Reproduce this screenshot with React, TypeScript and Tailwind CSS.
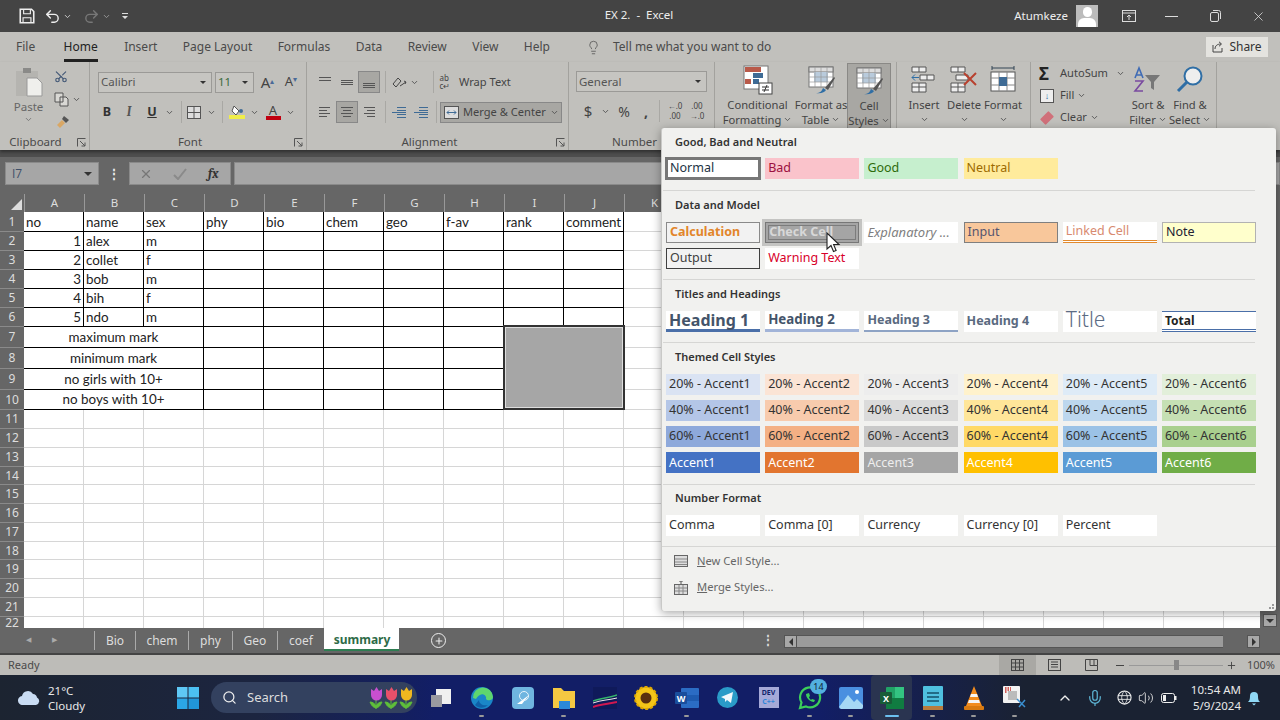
import React from 'react';
import { ChevronDown, ChevronUp, Lightbulb, Mic, Plus, Redo2, Scissors, Search, Undo2, Volume2, X } from 'lucide-react';

const Chev = ({ c = '#555' }: { c?: string }) => <ChevronDown size={9} strokeWidth={2.5} color={c} className="shrink-0" />;

const Lines = ({ rows, c = '#555' }: { rows: [number, number, number][]; c?: string }) => (
  <svg width="16" height="16" viewBox="0 0 16 16">
    {rows.map((r, i) => <rect key={i} x={r[0]} y={r[2]} width={r[1] - r[0]} height="1" fill={c} />)}
  </svg>
);

const Launcher = () => (
  <svg width="9" height="9" viewBox="0 0 9 9" className="shrink-0">
    <path d="M.5 8.5v-8h8M3 3l5 5M8 4.5V8H4.5" fill="none" stroke="#555" />
  </svg>
);

const Sep = () => <div className="w-px h-[22px] bg-[#a9a8a4] mx-[1px]" />;

const Combo = ({ w, text, c = '#555' }: { w: string; text: string; c?: string }) => (
  <div className={`${w} h-[21px] flex items-center justify-between px-[2px] bg-[#c6c5c1] border border-[#9b9a97] text-[11.5px]`} style={{ color: c }}>
    <span>{text}</span>
    <span className="w-0 h-0 mr-[3px] border-x-[3px] border-x-transparent border-t-[3px] border-t-[#333]" />
  </div>
);

const Slot = ({ w, children, cls = '' }: { w: string; children?: React.ReactNode; cls?: string }) => (
  <div className={`${w} h-[22px] flex items-center justify-center shrink-0 ${cls}`}>{children}</div>
);

const Group = ({ w, label, launcher, pr = 'pr-[16px]', children }: { w: string; label: string; launcher?: boolean; pr?: string; children: React.ReactNode }) => (
  <div className={`${w} h-[88px] shrink-0 flex flex-col relative border-r border-[#a3a29e]`}>
    <div className="h-[72px] shrink-0 flex">{children}</div>
    <div className={`h-[16px] shrink-0 flex items-center justify-center text-[11.5px] text-[#4a4a4a] ${pr}`}>{label}</div>
    {launcher && <div className="absolute right-[3px] bottom-[3px]"><Launcher /></div>}
  </div>
);

const BigBtn = ({ w, icon, l1, l2, cls = '' }: { w: string; icon: React.ReactNode; l1: string; l2?: string; cls?: string }) => (
  <div className={`${w} h-[66px] shrink-0 flex flex-col items-center text-[11.2px] leading-[15px] text-[#444] ${cls}`}>
    <div className="h-[35px] flex items-center justify-center">{icon}</div>
    <div className="whitespace-nowrap">{l1}</div>
    <div className="flex items-center gap-[2px] whitespace-nowrap h-[15px]">{l2}<Chev /></div>
  </div>
);

const TableIcon = ({ fill = '#fff' }: { fill?: string }) => (
  <svg width="34" height="30" viewBox="0 0 34 30">
    <rect x="5" y="2" width="24" height="20" fill={fill} stroke="#777" />
    <rect x="5" y="2" width="24" height="5" fill="#ddd" stroke="#777" />
    <rect x="10" y="7" width="14" height="10" fill="#b9cbdc" />
    <path d="M5 12h24M5 17h24M11 2v20M17 2v20M23 2v20" stroke="#999" strokeWidth=".7" />
    <path d="M12 28c4 0 6-2 7-5l3 2c-1 2-5 4-10 3z" fill="#2f6ea5" />
    <path d="M21 23l9-11 1 1-7 12z" fill="#555" />
  </svg>
);

const styleHead = 'text-[11px] font-semibold text-[#333] h-[19px] flex items-center pl-[13px]';
const cellBase = 'h-[21px] w-[94px] flex items-center px-[3px] text-[12.5px] leading-none whitespace-nowrap';

const themed: [string, string][][] = [
  [['20% - Accent1', 'bg-[#dae3f3]'], ['20% - Accent2', 'bg-[#fbe4d5]'], ['20% - Accent3', 'bg-[#ededed]'], ['20% - Accent4', 'bg-[#fff2cc]'], ['20% - Accent5', 'bg-[#deebf7]'], ['20% - Accent6', 'bg-[#e2efda]']],
  [['40% - Accent1', 'bg-[#b4c6e7]'], ['40% - Accent2', 'bg-[#f8cbad]'], ['40% - Accent3', 'bg-[#dbdbdb]'], ['40% - Accent4', 'bg-[#ffe699]'], ['40% - Accent5', 'bg-[#bdd7ee]'], ['40% - Accent6', 'bg-[#c6e0b4]']],
  [['60% - Accent1', 'bg-[#8ea9db]'], ['60% - Accent2', 'bg-[#f4b084]'], ['60% - Accent3', 'bg-[#c9c9c9]'], ['60% - Accent4', 'bg-[#ffd966]'], ['60% - Accent5', 'bg-[#9bc2e6]'], ['60% - Accent6', 'bg-[#a9d08e]']],
  [['Accent1', 'bg-[#4472c4] text-white'], ['Accent2', 'bg-[#e2752f] text-white'], ['Accent3', 'bg-[#a5a5a5] text-[#eee]'], ['Accent4', 'bg-[#ffc000] text-white'], ['Accent5', 'bg-[#5b9bd5] text-white'], ['Accent6', 'bg-[#70ad47] text-white']],
];

const Gallery = ({ children, gapY = 'gap-y-[5.3px]' }: { children: React.ReactNode; gapY?: string }) => (
  <div className={`grid grid-cols-[repeat(6,94px)] gap-x-[5.2px] ${gapY} pl-[4px] text-[#333]`}>{children}</div>
);

const Divider = () => <div className="h-px bg-[#d6d6d4] ml-[1px] mr-[21px]" />;

const CellStylesMenu = () => (
  <div className="absolute left-[661px] top-[128px] w-[615px] h-[483px] bg-[#f1f1ef] rounded-[3px] border-l border-[#c9c9c7] shadow-[0_2px_10px_rgba(0,0,0,0.35)] flex flex-col z-20 text-[#333]">
    <div className={`${styleHead} mt-[5px]`}>Good, Bad and Neutral</div>
    <div className="pt-[6px] pb-[11px]">
      <Gallery>
        <div className={`${cellBase} bg-white border-[3px] border-[#777] w-[96px] -ml-[1px] -my-[1px] h-[23px] text-[#234] pl-[2px]`}>Normal</div>
        <div className={`${cellBase} bg-[#fac3cb] text-[#9c1040]`}>Bad</div>
        <div className={`${cellBase} bg-[#c6efce] text-[#2e6b0b]`}>Good</div>
        <div className={`${cellBase} bg-[#ffeb9c] text-[#9c6a00]`}>Neutral</div>
      </Gallery>
    </div>
    <Divider />
    <div className={`${styleHead} mt-[5px]`}>Data and Model</div>
    <div className="pt-[7px] pb-[10px]">
      <Gallery gapY="gap-y-[5px]">
        <div className={`${cellBase} bg-[#f2f2f2] border border-[#8a8a8a] text-[#e2852a] font-bold text-[11.6px]`}>Calculation</div>
        <div className={`${cellBase} bg-[#a5a5a5] border border-[#777] outline-[3px] outline-[#c4c4c2] text-[#d8d8d8] font-bold text-[11.6px] relative`}>
          <span className="absolute inset-[2px] border border-[#7c7c7c]" />
          <span className="relative">Check Cell</span>
        </div>
        <div className={`${cellBase} bg-white italic text-[#7f7f7f] text-[13px]`}>Explanatory ...</div>
        <div className={`${cellBase} bg-[#f8c79b] border border-[#7f7f7f] text-[#55556f]`}>Input</div>
        <div className={`${cellBase} bg-white border-b-[3px] border-double border-b-[#e28a2e] text-[#d88a70]`}>Linked Cell</div>
        <div className={`${cellBase} bg-[#ffffcc] border border-[#b2b2b2] text-[#223]`}>Note</div>
        <div className={`${cellBase} bg-[#f2f2f2] border border-[#3f3f3f] text-[#3f3f3f]`}>Output</div>
        <div className={`${cellBase} bg-white text-[#d8002a]`}>Warning Text</div>
      </Gallery>
    </div>
    <Divider />
    <div className={`${styleHead} mt-[5px]`}>Titles and Headings</div>
    <div className="pt-[7px] pb-[10px]">
      <Gallery>
        <div className={`${cellBase} bg-white border-b-[3px] border-[#4a6fa8] font-bold text-[#44546a] text-[16px]`}>Heading 1</div>
        <div className={`${cellBase} bg-white border-b-[3px] border-[#a2b4d8] font-bold text-[#44546a] text-[13.3px]`}>Heading 2</div>
        <div className={`${cellBase} bg-white border-b-2 border-[#8ea3c4] font-bold text-[#5a6a80] text-[11.7px]`}>Heading 3</div>
        <div className={`${cellBase} bg-white font-bold text-[#5a6a80] text-[11.7px]`}>Heading 4</div>
        <div className={`${cellBase} bg-white text-[#5c6c84] text-[21px] font-light items-start`}><span className="-mt-[2px]">Title</span></div>
        <div className={`${cellBase} bg-white border-t border-[#4a6fa8] border-b-[3px] border-b-[#4a6fa8] border-double font-bold text-[#222] text-[12px]`}>Total</div>
      </Gallery>
    </div>
    <Divider />
    <div className={`${styleHead} mt-[5px]`}>Themed Cell Styles</div>
    <div className="pt-[6.5px] pb-[10.5px]">
      <Gallery>
        {themed.flat().map(([t, cls]) => <div key={t} className={`${cellBase} ${cls}`}>{t}</div>)}
      </Gallery>
    </div>
    <Divider />
    <div className={`${styleHead} mt-[4px]`}>Number Format</div>
    <div className="pt-[7px] pb-[10px]">
      <Gallery>
        {['Comma', 'Comma [0]', 'Currency', 'Currency [0]', 'Percent'].map(t => <div key={t} className={`${cellBase} bg-white`}>{t}</div>)}
      </Gallery>
    </div>
    <div className="h-px bg-[#d6d6d4] mr-0" />
    <div className="flex items-center h-[27px] pl-[12px] gap-[9px] text-[11.2px] text-[#666] mt-[1px]">
      <svg width="14" height="12" viewBox="0 0 14 12"><rect x=".5" y=".5" width="13" height="11" fill="#ddd" stroke="#666" /><path d="M1 4h12M1 7h12M1 9.5h12" stroke="#888" /></svg>
      <span><u>N</u>ew Cell Style...</span>
    </div>
    <div className="flex items-center h-[26px] pl-[12px] gap-[9px] text-[11.2px] text-[#666]">
      <svg width="14" height="14" viewBox="0 0 14 14"><rect x=".5" y="3.5" width="13" height="10" fill="#ddd" stroke="#666" /><path d="M1 7h12M1 10h12M5 4v9M9 4v9" stroke="#888" /><path d="M7 0v3M5 0h4" stroke="#555" /></svg>
      <span><u>M</u>erge Styles...</span>
    </div>
    <div className="absolute right-[2px] bottom-[2px] grid grid-cols-2 gap-[1px]">
      <span /><span className="w-[2px] h-[2px] bg-[#999]" />
      <span className="w-[2px] h-[2px] bg-[#999]" /><span className="w-[2px] h-[2px] bg-[#999]" />
    </div>
    <svg className="absolute left-[163px] top-[104px]" width="16" height="22" viewBox="0 0 16 22">
      <path d="M2 1v16l4-3.5 2.5 6 2.6-1-2.5-6H14z" fill="#fff" stroke="#222" strokeWidth="1.1" />
    </svg>
  </div>
);

const TitleBar = () => (
  <div className="h-[32px] bg-[#444] shrink-0 flex items-center text-[#eee] relative">
    <div className="w-[18px]" />
    <svg width="18" height="18" viewBox="0 0 16 16"><path d="M2 2h10l2 2v10H2z" fill="none" stroke="#eee" strokeWidth="1.4" /><path d="M5 2.5v3.5h6V2.5M4.500 14v-4.500h7V14" fill="none" stroke="#eee" /></svg>
    <div className="w-[8px]" />
    <Undo2 size={17} color="#eee" />
    <div className="w-[2px]" /><Chev c="#ccc" />
    <div className="w-[11px]" />
    <Redo2 size={17} color="#777" />
    <div className="w-[2px]" /><Chev c="#999" />
    <div className="w-[10px]" />
    <svg width="8" height="10" viewBox="0 0 8 10"><path d="M1 2h6v1H1zM1 5h6L4 8z" fill="#ddd" /></svg>
    <div className="absolute left-0 right-0 text-center text-[11.5px] whitespace-pre translate-x-[-1px] pointer-events-none -mt-[3px]">EX 2.  -  Excel</div>
    <div className="ml-auto flex items-center">
      <span className="text-[11.5px] mr-[8px]">Atumkeze</span>
      <div className="w-[22px] h-[22px] bg-[#bcbcbc] overflow-hidden flex flex-col items-center mr-[24px]">
        <div className="w-[9px] h-[10px] rounded-full bg-white mt-[2px]" />
        <div className="w-[18px] h-[10px] rounded-t-[6px] bg-white mt-[1px]" />
      </div>
      <svg width="14" height="12" viewBox="0 0 14 12" className="mr-[29px]"><rect x=".5" y=".5" width="13" height="11" fill="none" stroke="#ddd" /><path d="M1 3h12M7 10V5M5 7l2-2 2 2" stroke="#ddd" fill="none" /></svg>
      <div className="w-[13px] h-px bg-[#ddd] mr-[32px]" />
      <svg width="11" height="12" viewBox="0 0 11 12" className="mr-[30px]"><rect x=".5" y="2.500" width="8" height="9" rx="1.500" fill="none" stroke="#ddd" /><path d="M3 .5h5.500a2 2 0 0 1 2 2V9" fill="none" stroke="#ddd" /></svg>
      <X size={15} strokeWidth={1.3} color="#ddd" className="mr-[14px]" />
    </div>
  </div>
);

const tabs = ['File', 'Home', 'Insert', 'Page Layout', 'Formulas', 'Data', 'Review', 'View', 'Help'];

const TabRow = () => (
  <div className="h-[30px] bg-[#c1c0bc] shrink-0 flex items-center pl-[16px] text-[12px] text-[#4a4a4a]">
    <div className="flex gap-[25.4px] items-center h-full">
      {tabs.map(t => (
        <div key={t} className={t === 'Home' ? 'h-full flex items-center border-b-[3px] pt-[3px] border-[#222] text-[#222] ml-[3px] mr-[1px]' : ''}>{t}</div>
      ))}
    </div>
    <Lightbulb size={15} strokeWidth={1.3} color="#555" className="ml-[36px]" />
    <span className="ml-[12px] text-[#4a4a4a]">Tell me what you want to do</span>
    <div className="ml-auto mr-[12px] w-[62px] h-[20px] bg-[#e4e3df] flex items-center justify-center gap-[5px] text-[#333]">
      <svg width="12" height="12" viewBox="0 0 12 12"><path d="M1 4v7h9V7M3 8c0-3 2-5 6-5M7 .8 9.500 3 7 5.300" fill="none" stroke="#444" /></svg>
      Share
    </div>
  </div>
);

const Ribbon = () => (
  <div className="h-[88px] bg-[#c1c0bc] shrink-0 flex shadow-[0_2px_3px_rgba(0,0,0,0.4)] relative z-10">
    <Group w="w-[90px]" label="Clipboard" launcher pr="pr-[18px]">
      <div className="w-[54px] flex flex-col items-center pt-[5px] pl-[3px] text-[11.5px] text-[#666]">
        <svg width="28" height="30" viewBox="0 0 28 30"><rect x="1" y="4" width="22" height="25" fill="#b5b4b0" /><rect x="8" y="1" width="8" height="5" fill="#8a8a88" /><path d="M12 11h10l5 5v13H12z" fill="#efefec" stroke="#999" /></svg>
        <span className="mt-[1px]">Paste</span>
        <Chev c="#777" />
      </div>
      <div className="flex flex-col items-start pt-[3px] gap-[2px]">
        <Slot w="w-[14px]" cls="h-[20px]"><Scissors size={15} color="#465a78" className="-rotate-90" /></Slot>
        <div className="flex items-center gap-[2px] h-[20px]">
          <svg width="16" height="15" viewBox="0 0 16 15"><path d="M1 1h8v9H1zM6 5h6l2 2v7H6z" fill="#d9d8d4" stroke="#555" /></svg>
          <Chev />
        </div>
        <Slot w="w-[16px]" cls="h-[20px] ml-[1px]"><svg width="14" height="14" viewBox="0 0 14 14"><path d="M8 1l5 4-3 3-4-4z" fill="#555" /><path d="M6 5l3 3-5 5-3-3z" fill="#d9a765" /></svg></Slot>
      </div>
    </Group>
    <Group w="w-[217px]" label="Font" launcher>
      <div className="flex flex-col pl-[7px] pt-[9px] gap-[8px]">
        <div className="flex items-center h-[22px] ml-[1px]">
          <Combo w="w-[114px]" text="Calibri" />
          <div className="w-[3px]" />
          <Combo w="w-[39px]" text="11" c="#3b6b3b" />
          <Slot w="w-[25px]" cls="ml-[1px] text-[#444] text-[15px]"><span>A<sup className="text-[8px] text-[#4a6a98]">▴</sup></span></Slot>
          <Slot w="w-[22px]" cls="text-[#444] text-[13px]"><span>A<sup className="text-[8px] text-[#4a6a98]">▾</sup></span></Slot>
        </div>
        <div className="flex items-center h-[22px] text-[#333]">
          <Slot w="w-[20px]" cls="font-bold text-[12.5px]">B</Slot>
          <Slot w="w-[24px]" cls="italic font-serif text-[13px] font-bold text-[#555]">I</Slot>
          <Slot w="w-[22px]" cls="underline font-bold text-[12.5px]">U</Slot>
          <Slot w="w-[12px]"><Chev /></Slot>
          <div className="w-[5px]" /><Sep />
          <Slot w="w-[22px]"><svg width="14" height="13" viewBox="0 0 14 13"><rect x=".5" y=".5" width="13" height="12" fill="#ddd" stroke="#555" /><path d="M7 0v13M0 6.500h14" stroke="#555" /></svg></Slot>
          <Slot w="w-[12px]"><Chev /></Slot>
          <div className="w-[4px]" /><Sep />
          <Slot w="w-[24px]" cls="ml-[1px]"><svg width="16" height="16" viewBox="0 0 16 16"><rect y="11" width="16" height="4" fill="#f0ee4a" /><path d="M5 2l5 5-3 4-4-4z" fill="#fff" stroke="#555" /><circle cx="12" cy="7" r="2" fill="#3f6b95" /></svg></Slot>
          <Slot w="w-[10px]"><Chev /></Slot>
          <Slot w="w-[24px]" cls="ml-[2px]"><div className="flex flex-col items-center leading-[12px] text-[13px] text-[#444]">A<div className="w-[15px] h-[4px] bg-[#c00010]" /></div></Slot>
          <Slot w="w-[10px]"><Chev /></Slot>
        </div>
      </div>
    </Group>
    <Group w="w-[262px]" label="Alignment" launcher>
      <div className="flex flex-col pl-[7px] pt-[9px] gap-[8px]">
        <div className="flex items-center h-[22px]">
          <Slot w="w-[22px]"><Lines rows={[[2, 14, 3], [2, 14, 6]]} /></Slot>
          <Slot w="w-[22px]"><Lines rows={[[2, 14, 6], [2, 14, 8], [2, 14, 10]]} /></Slot>
          <Slot w="w-[22px]" cls="bg-[#a8a7a3] border border-[#888]"><Lines rows={[[2, 14, 9], [2, 14, 11], [2, 14, 13]]} /></Slot>
          <div className="w-[4px]" /><Sep /><div className="w-[2px]" />
          <Slot w="w-[20px]"><svg width="16" height="14" viewBox="0 0 16 14"><path d="M2 9l5-6 3 3-5 6zM9 11l6-4M13 6l2 1-1 2" fill="none" stroke="#444" /></svg></Slot>
          <Slot w="w-[10px]"><Chev /></Slot>
          <div className="w-[13px]" /><Sep />
          <Slot w="w-[14px]" cls="ml-[3px] text-[8px] leading-[8px] text-[#444]"><span>ab<br />c↵</span></Slot>
          <span className="text-[11.1px] text-[#444] ml-[7px] whitespace-nowrap">Wrap Text</span>
        </div>
        <div className="flex items-center h-[22px]">
          <Slot w="w-[22px]"><Lines rows={[[2, 13, 3], [2, 10, 6], [2, 13, 9], [2, 10, 12]]} /></Slot>
          <Slot w="w-[22px]" cls="bg-[#a8a7a3] border border-[#888]"><Lines rows={[[2, 14, 3], [4, 12, 6], [2, 14, 9], [4, 12, 12]]} /></Slot>
          <Slot w="w-[22px]"><Lines rows={[[3, 14, 3], [6, 14, 6], [3, 14, 9], [6, 14, 12]]} /></Slot>
          <div className="w-[4px]" /><Sep /><div className="w-[1px]" />
          <Slot w="w-[22px]"><Lines c="#3f6b95" rows={[[6, 15, 3], [6, 15, 6], [1, 15, 8], [6, 15, 10], [6, 15, 13]]} /></Slot>
          <Slot w="w-[22px]"><Lines c="#3f6b95" rows={[[6, 15, 3], [6, 15, 6], [1, 15, 8], [6, 15, 10], [6, 15, 13]]} /></Slot>
          <div className="w-[3px]" /><Sep />
          <div className="w-[122px] h-[21px] ml-[2px] bg-[#a8a7a3] border border-[#888] flex items-center text-[11.1px] text-[#444] pl-[3px] gap-[4px] whitespace-nowrap">
            <svg width="15" height="13" viewBox="0 0 15 13" className="shrink-0"><rect x=".5" y=".5" width="14" height="12" fill="#ddd" stroke="#555" /><path d="M3 6.500h9M3 6.500l2-2M3 6.500l2 2M12 6.500l-2-2M12 6.500l-2 2" stroke="#3f6b95" fill="none" /></svg>
            <span>Merge &amp; Center</span>
            <span className="ml-auto mr-[4px]"><Chev /></span>
          </div>
        </div>
      </div>
    </Group>
    <Group w="w-[146px]" label="Number" pr="pr-[14px]">
      <div className="flex flex-col pl-[7px] pt-[9px] gap-[8px]">
        <Combo w="w-[131px]" text="General" />
        <div className="flex items-center h-[22px] text-[#444]">
          <Slot w="w-[22px]" cls="ml-[1px] text-[15px]">$</Slot>
          <Slot w="w-[12px]"><Chev /></Slot>
          <Slot w="w-[26px]" cls="text-[14px]">%</Slot>
          <Slot w="w-[18px]" cls="font-bold text-[14px]">,</Slot>
          <div className="w-[3px]" /><Sep /><div className="w-[3px]" />
          <Slot w="w-[22px]" cls="text-[8px] leading-[10px] text-[#444]"><span className="text-center">←.0<br />.00</span></Slot>
          <Slot w="w-[22px]" cls="text-[8px] leading-[10px] text-[#444]"><span className="text-center">.00<br />→.0</span></Slot>
        </div>
      </div>
    </Group>
    <Group w="w-[182px]" label="">
      <BigBtn w="w-[85px]" l1="Conditional" l2="Formatting" icon={
        <svg width="30" height="30" viewBox="0 0 30 30"><rect x="1" y="1" width="24" height="23" fill="#fff" stroke="#777" /><rect x="2" y="2" width="8" height="5" fill="#b95a4a" /><rect x="10" y="2" width="8" height="5" fill="#b95a4a" /><rect x="10" y="8" width="10" height="5" fill="#3f6b95" /><rect x="10" y="14" width="6" height="5" fill="#3f6b95" /><rect x="2" y="14" width="6" height="5" fill="#b95a4a" /><rect x="16" y="18" width="13" height="11" fill="#fff" stroke="#444" /><path d="M19 22h7M19 25h7M24 20l-3 7" stroke="#333" /></svg>
      } />
      <BigBtn w="w-[46px]" cls="-ml-[2px]" l1="Format as" l2="Table" icon={<TableIcon />} />
      <div className="w-[3px]" />
      <BigBtn w="w-[44px]" cls="bg-[#a8a7a3] border border-[#8a8986] h-[64px] mt-[1px]" l1="Cell" l2="Styles" icon={<TableIcon />} />
    </Group>
    <Group w="w-[134px]" label="">
      <BigBtn w="w-[42px]" cls="ml-[6px]" l1="Insert" icon={
        <svg width="26" height="28" viewBox="0 0 26 28"><path d="M1 1h14v5H1zM8 1v5M1 17h14v9H1zM1 21h14M8 17v9M9 9h14v5H9zM16 9v5" fill="#eee" stroke="#555" /><path d="M8 11.500H1M1 11.500l3-3M1 11.500l3 3" stroke="#2f6ea5" fill="none" /></svg>
      } />
      <BigBtn w="w-[38px]" l1="Delete" icon={
        <svg width="28" height="28" viewBox="0 0 28 28"><path d="M1 1h14v5H1zM8 1v5M1 17h14v9H1zM1 21h14M8 17v9M6 9h12v5H6z" fill="#eee" stroke="#555" /><path d="M14 7l12 12M26 7L14 19" stroke="#b8412f" strokeWidth="2" /></svg>
      } />
      <BigBtn w="w-[40px]" l1="Format" icon={
        <svg width="28" height="28" viewBox="0 0 28 28"><path d="M3 2h22M3 0v4M25 0v4" stroke="#345" /><rect x="2" y="6" width="24" height="19" fill="#fff" stroke="#555" /><path d="M2 12h24M10 6v19M18 6v19M2 19h24" stroke="#888" /><rect x="10" y="11" width="8" height="9" fill="#3f6b95" /></svg>
      } />
    </Group>
    <Group w="w-[186px]" label="">
      <div className="flex flex-col pl-[8px] w-[104px] text-[11.1px] text-[#444] gap-[1px] pt-[1px]">
        <div className="flex items-center h-[21px]"><span className="w-[18px] text-[17px] text-[#222] font-bold leading-none">Σ</span><span className="ml-[3px]">AutoSum</span><span className="ml-[8px]"><Chev /></span></div>
        <div className="flex items-center h-[21px]"><span className="w-[14px] h-[14px] ml-[1px] bg-[#eee] border border-[#555] text-[#2f6ea5] text-[9px] font-bold flex items-center justify-center">↓</span><span className="ml-[6px]">Fill</span><span className="ml-[3px]"><Chev /></span></div>
        <div className="flex items-center h-[21px]"><span className="w-[12px] h-[8px] ml-[2px] bg-[#d0707a] -rotate-45 rounded-[1px]" /><span className="ml-[7px]">Clear</span><span className="ml-[3px]"><Chev /></span></div>
      </div>
      <BigBtn w="w-[42px]" cls="-ml-[8px]" l1="Sort &" l2="Filter" icon={
        <svg width="30" height="28" viewBox="0 0 30 28"><path d="M2 12 6 2l4 10M3.500 9h5" fill="none" stroke="#3f6bb5" strokeWidth="1.6" /><path d="M2 15h8l-8 10h8" fill="none" stroke="#7a4aa0" strokeWidth="1.6" /><path d="M12 9h15l-6 7v8l-3-2v-6z" fill="#777" /></svg>
      } />
      <BigBtn w="w-[42px]" l1="Find &" l2="Select" icon={
        <svg width="28" height="30" viewBox="0 0 28 30"><circle cx="17" cy="11" r="8.500" fill="#eee" stroke="#2f6ea5" strokeWidth="2" /><path d="M11 17 2 26" stroke="#2f6ea5" strokeWidth="3" /></svg>
      } />
    </Group>
  </div>
);

const FormulaBar = () => (
  <div className="h-[44px] bg-[#666] shrink-0 flex items-start pt-[5px] pl-[5px] gap-0 border-t-[7px] border-[#4e4e4e]">
    <div className="w-[94px] h-[23px] bg-[#a6a6a6] border border-[#8a8a8a] flex items-center justify-between px-[6px] text-[12px] text-[#3f4f68] font-['Open_Sans',sans-serif]">
      I7<span className="w-0 h-0 border-x-[4px] border-x-transparent border-t-[4px] border-t-[#333]" />
    </div>
    <div className="w-[30px] h-[23px] flex items-center justify-center text-[#eee] font-bold text-[12px] leading-none">⋮</div>
    <div className="w-[102px] h-[23px] bg-[#a6a6a6] border border-[#8a8a8a] flex items-center text-[#777]">
      <X size={14} className="ml-[9px]" />
      <svg width="14" height="12" viewBox="0 0 14 12" className="ml-[20px]"><path d="M1 7l4 4 8-10" fill="none" stroke="#8a8a8a" strokeWidth="2" /></svg>
      <span className="ml-[21px] italic font-serif text-[13px] font-bold text-[#333]">fx</span>
    </div>
    <div className="w-[3px]" />
    <div className="flex-1 h-[23px] bg-[#a6a6a6] border border-[#8a8a8a]" />
  </div>
);

const colLetters = ['A', 'B', 'C', 'D', 'E', 'F', 'G', 'H', 'I', 'J', 'K'];
const rowH = ['h-[20px]', 'h-[19px]', 'h-[19px]', 'h-[19px]', 'h-[19px]', 'h-[19px]', 'h-[21px]', 'h-[21px]', 'h-[21px]', 'h-[20px]', 'h-[19px]', 'h-[19px]', 'h-[19px]', 'h-[18px]', 'h-[19px]', 'h-[19px]', 'h-[19px]', 'h-[18px]', 'h-[19px]', 'h-[19px]', 'h-[19px]', 'h-[13px]'];
const data: string[][] = [
  ['no', 'name', 'sex', 'phy', 'bio', 'chem', 'geo', 'f-av', 'rank', 'comment'],
  ['1', 'alex', 'm'], ['2', 'collet', 'f'], ['3', 'bob', 'm'], ['4', 'bih', 'f'], ['5', 'ndo', 'm'],
];
const merged = ['maximum mark', 'minimum mark', 'no girls with 10+', 'no boys with 10+'];

const Sheet = () => (
  <div className="flex-1 flex flex-col relative min-h-0">
    <div className="h-[18px] flex bg-[#666] shrink-0 text-[#ddd] text-[11.5px]">
      <div className="w-[24px] h-full flex items-end justify-end pr-[2px] pb-[2px]">
        <div className="w-0 h-0 border-l-[11px] border-l-transparent border-b-[11px] border-b-[#ddd]" />
      </div>
      {colLetters.map(l => <div key={l} className="w-[60px] h-full border-l border-[#999] flex items-center justify-center">{l}</div>)}
    </div>
    <div className="flex-1 bg-white overflow-hidden">
      {rowH.map((h, r) => (
        <div key={r} className={`${h} flex`}>
          <div className="w-[24px] shrink-0 bg-[#666] border-b border-[#8a8a8a] text-[#ddd] text-[12px] flex items-center justify-center">{r + 1}</div>
          <div className="flex font-['Lato',sans-serif] text-[13.4px] text-[#222]">
            {Array.from({ length: 21 }).map((_, c) => {
              const inBox = r < 10 && c < 10;
              const border = inBox ? 'border-r border-b border-black' : 'border-r border-b border-[#d6d6d6]';
              if (r >= 6 && r < 10 && c < 3) {
                if (c > 0) return null;
                return <div key={c} className={`w-[180px] ${border} flex items-center justify-center`}>{merged[r - 6]}</div>;
              }
              const v = r < 6 ? data[r][c] : undefined;
              const right = r > 0 && r < 6 && c === 0;
              return <div key={c} className={`${c === 20 ? 'w-[36px]' : 'w-[60px]'} shrink-0 ${c === 20 ? 'border-b border-[#d6d6d6]' : border} flex items-center pt-[1px] ${right ? 'justify-end pr-[2px]' : 'pl-[2px]'} overflow-hidden whitespace-nowrap`}>{v}</div>;
            })}
          </div>
        </div>
      ))}
    </div>
    {/* selected merged block */}
    <div className="absolute left-[503px] top-[131px] w-[122px] h-[85px] bg-[#a6a6a6] border-2 border-[#333] outline outline-[#ddd] -outline-offset-[3px]" />
    {/* right scroll column */}
    <div className="absolute right-0 top-0 bottom-0 w-[20px] bg-[#666] flex items-end justify-center pb-[1px]">
      <div className="w-[14px] h-[13px] bg-[#a8a8a8] border border-[#555] flex items-center justify-center">
        <span className="w-0 h-0 border-x-[4px] border-x-transparent border-t-[4px] border-t-[#333]" />
      </div>
    </div>
  </div>
);

const sheetTabs: [string, string][] = [['Bio', 'w-[41px]'], ['chem', 'w-[53px]'], ['phy', 'w-[44px]'], ['Geo', 'w-[45px]'], ['coef', 'w-[47px]']];

const TabsBar = () => (
  <div className="h-[27px] bg-[#666] shrink-0 flex items-start border-b-2 border-[#444] text-[12px] text-[#ddd]">
    <div className="w-[94px] h-[24px] flex items-center text-[#aaa] pl-[26px] gap-[21px] text-[7px]"><span>◀</span><span>▶</span></div>
    {sheetTabs.map(([t, w]) => (
      <div key={t} className={`${w} h-[19px] mt-[3px] border-l border-[#aaa] flex items-center justify-center`}>{t}</div>
    ))}
    <div className="w-[75px] h-[23px] bg-white border-b-2 border-[#2e7d52] text-[#2e6b47] font-bold flex items-center justify-center pt-[2px] pl-[1px]">summary</div>
    <div className="ml-[32px] mt-[5px] w-[15px] h-[15px] rounded-full border border-[#eee] flex items-center justify-center"><Plus size={10} strokeWidth={2.5} color="#eee" /></div>
    <div className="ml-[316px] h-[24px] flex items-center font-bold text-[#ddd] leading-none">⋮</div>
    <div className="ml-[10px] mt-[7px] h-[13px] flex items-stretch">
      <div className="w-[13px] bg-[#a8a8a8] border border-[#555] flex items-center justify-center"><span className="w-0 h-0 border-y-[4px] border-y-transparent border-r-[4px] border-r-[#333]" /></div>
      <div className="w-[426px] bg-[#9b9b9b] border-y border-[#555]" />
      <div className="w-[24px] bg-[#666]" />
      <div className="w-[13px] bg-[#a8a8a8] border border-[#555] flex items-center justify-center"><span className="w-0 h-0 border-y-[4px] border-y-transparent border-l-[4px] border-l-[#333]" /></div>
    </div>
  </div>
);

const StatusBar = () => (
  <div className="h-[20px] bg-[#bdbcb8] shrink-0 flex items-center pl-[8px] text-[11px] text-[#4a4a4a]">
    <span>Ready</span>
    <div className="ml-auto flex items-center h-full">
      <div className="w-[37px] h-full bg-[#a9a8a4] flex items-center justify-center">
        <svg width="13" height="12" viewBox="0 0 13 12"><rect x=".5" y=".5" width="12" height="11" fill="none" stroke="#444" /><path d="M4.500 0v12M8.500 0v12M0 4h13M0 8h13" stroke="#444" /></svg>
      </div>
      <div className="w-[37px] flex items-center justify-center">
        <svg width="13" height="12" viewBox="0 0 13 12"><rect x=".5" y=".5" width="12" height="11" fill="none" stroke="#444" /><path d="M3 3h7M3 5.500h7M3 8h7" stroke="#444" /></svg>
      </div>
      <div className="w-[37px] flex items-center justify-center">
        <svg width="13" height="12" viewBox="0 0 13 12"><path d="M.5.500v11h12v-5M5 0v6.500h7.500M9 0v6.500M.5.500h12v6" fill="none" stroke="#444" /></svg>
      </div>
      <div className="w-[8px] h-px bg-[#444] ml-[6px]" />
      <div className="w-[94px] h-px bg-[#999] ml-[5px] relative flex items-center justify-center">
        <span className="w-[5px] h-[10px] bg-[#888] absolute left-[45px] top-[-5px]" />
      </div>
      <Plus size={11} color="#444" className="ml-[3px]" />
      <span className="ml-[10px] mr-[5px]">100%</span>
    </div>
  </div>
);

const Ti = ({ children, dot = true, active = false }: { children: React.ReactNode; dot?: boolean; active?: boolean }) => (
  <div className={`w-[41px] h-full flex items-center justify-center relative shrink-0 ${active ? 'bg-[#2a3450] rounded-[4px]' : ''}`}>
    {children}
    {dot && <span className={`absolute bottom-[3px] ${active ? 'w-[14px] bg-[#6cc0f0]' : 'w-[5px] bg-[#999]'} h-[2px] rounded-full`} />}
  </div>
);

const Tulip = ({ c }: { c: string }) => (
  <svg width="15" height="24" viewBox="0 0 15 24"><path d="M7 13v10M7 22C3 21 2 18 1 16c3 0 5 2 6 4 1-2 3-4 6-4-1 2-2 5-6 6" fill="#5fbf3a" stroke="#5fbf3a" /><path d="M2 3l3 2 2.500-4L10 5l3-2v6a5.500 5.500 0 0 1-11 0z" fill={c} /></svg>
);

const Taskbar = () => (
  <div className="h-[45px] shrink-0 bg-[linear-gradient(90deg,#1c2431_0%,#1c2540_20%,#121e66_34%,#121e66_64%,#1a2232_80%)] flex items-center text-[#e8e8e8] text-[11.5px]">
    <div className="w-[177px] shrink-0 flex items-center pl-[18px] h-full">
      <svg width="23" height="15" viewBox="0 0 23 15"><path d="M5 15a4.500 4.500 0 0 1-1-9 6 6 0 0 1 11-2 4.500 4.500 0 0 1 4 3.500A4 4 0 0 1 18 15z" fill="#c9dcf3" /></svg>
      <div className="ml-[7px] leading-[15px]"><div>21°C</div><div>Cloudy</div></div>
    </div>
    <svg width="22" height="22" viewBox="0 0 22 22" className="shrink-0">
      <rect width="10.500" height="10.500" fill="#5fc8f5" /><rect x="11.500" width="10.500" height="10.500" fill="#4cc0f2" /><rect y="11.500" width="10.500" height="10.500" fill="#2ba6e6" /><rect x="11.500" y="11.500" width="10.500" height="10.500" fill="#2196da" />
    </svg>
    <div className="ml-[12px] w-[206px] h-[31px] rounded-full bg-[#33415f] flex items-center pl-[11px] text-[#ddd] text-[13px] shrink-0">
      <Search size={15} color="#eee" />
      <span className="ml-[10px]">Search</span>
      <div className="ml-auto mr-[3px] flex"><Tulip c="#c84fd0" /><Tulip c="#e8506a" /><Tulip c="#f0b820" /></div>
    </div>
    <div className="w-[3px] shrink-0" />
    <div className="flex h-full">
      <Ti dot={false}><svg width="20" height="20" viewBox="0 0 20 20"><rect x="5" y="1" width="15" height="15" fill="#f0f0f0" /><rect y="7" width="11" height="12" fill="#9a9aa0" /></svg></Ti>
      <Ti><svg width="24" height="24" viewBox="0 0 24 24"><circle cx="12" cy="12" r="11" fill="#1a86c8" /><path d="M3 12a9 9 0 0 1 20-1c0 4-6 4-7 2 1-3-3-6-6-4-2 1-3 2-4 4z" fill="#5ed66e" /><path d="M9 14c0 4 4 6 9 5-3 3-9 4-13 0" fill="#0f5fa8" /></svg></Ti>
      <Ti dot={false}><div className="w-[22px] h-[22px] rounded-[4px] bg-[#6fb5e0] flex items-center justify-center"><svg width="16" height="16" viewBox="0 0 16 16"><path d="M2 14 14 5l-7 9z" fill="#fff" /><circle cx="9" cy="6" r="4.500" fill="none" stroke="#e8f4fb" /></svg></div></Ti>
      <Ti><svg width="24" height="22" viewBox="0 0 24 22"><path d="M1 1h8l3 3h11v17H1z" fill="#f5c842" /><rect x="7" y="14" width="11" height="8" fill="#2b88d8" /></svg></Ti>
      <Ti dot={false}><svg width="24" height="22" viewBox="0 0 24 22"><rect width="24" height="22" fill="#0f1a5a" /><path d="M0 14c8-3 16-3 24-6" stroke="#35b56a" strokeWidth="1.500" fill="none" /><path d="M0 16c8-3 16-3 24-5" stroke="#f0e8e8" strokeWidth="1" fill="none" /><path d="M0 20c8-3 16-3 24-5" stroke="#d01850" strokeWidth="2" fill="none" /></svg></Ti>
      <Ti dot={false}><svg width="24" height="24" viewBox="0 0 24 24"><circle cx="12" cy="12" r="11" fill="#f5c518" stroke="#e0a800" strokeDasharray="3 2" strokeWidth="2" /><circle cx="12" cy="12" r="5.500" fill="#5a2f0f" /></svg></Ti>
      <Ti><svg width="24" height="20" viewBox="0 0 24 20"><rect x="6" width="18" height="20" rx="1" fill="#2b6cc4" /><rect x="6" y="7" width="18" height="6" fill="#1e5bb0" /><rect y="4" width="12" height="12" rx="1" fill="#1a4e9c" /><text x="6" y="14" textAnchor="middle" fontSize="9" fontWeight="700" fill="#fff">W</text></svg></Ti>
      <Ti dot={false}><svg width="21" height="21" viewBox="0 0 21 21"><circle cx="10.500" cy="10.500" r="10.500" fill="#2a9bc8" /><path d="M4 10l12-5-2 11-4-3-2 2v-3z" fill="#f2f8fc" /></svg></Ti>
      <Ti dot={false}><div className="w-[20px] h-[21px] bg-[#a5a9d8] text-[#12246a] text-[7px] font-bold flex flex-col items-center leading-[9px] pt-[1px]">DEV<span className="text-[#2f86d8] font-bold">C++</span></div></Ti>
      <Ti><svg width="24" height="24" viewBox="0 0 24 24"><path d="M2 22l1.500-5.500A10 10 0 1 1 8 20.500z" fill="none" stroke="#3ccf5a" strokeWidth="2.200" /><path d="M8 8c0 4 4 8 8 8l1-2-3-1-1 1c-1-1-2-2-2-3l1-1-1-3z" fill="#3ccf5a" /></svg><span className="absolute top-[4px] right-[3px] w-[17px] h-[15px] rounded-full bg-[#52b0e0] text-[9px] text-[#123] flex items-center justify-center">14</span></Ti>
      <Ti><svg width="24" height="22" viewBox="0 0 24 22"><rect width="24" height="22" rx="2" fill="#4a8fe0" /><path d="M0 20 9 8l6 7 3-3 6 6v2a2 2 0 0 1-2 2H2z" fill="#a6d8f5" /><circle cx="18" cy="5" r="2" fill="#fff" /></svg></Ti>
      <Ti active><svg width="24" height="22" viewBox="0 0 24 22"><rect x="6" width="18" height="22" rx="1" fill="#21a366" /><rect x="15" width="9" height="11" fill="#33c481" /><rect x="6" y="11" width="18" height="11" fill="#107c41" /><rect y="5" width="12" height="12" rx="1" fill="#185c37" /><text x="6" y="14.500" textAnchor="middle" fontSize="9" fontWeight="700" fill="#fff">X</text></svg></Ti>
      <Ti><svg width="20" height="24" viewBox="0 0 20 24"><rect width="20" height="22" rx="1" fill="#4fc0e0" /><rect y="20" width="20" height="4" fill="#b97c3c" /><path d="M4 7h12M4 11h12M4 15h12" stroke="#14506a" strokeWidth="1.500" /></svg></Ti>
      <Ti><svg width="20" height="24" viewBox="0 0 20 24"><path d="M10 0l8 20H2z" fill="#f28c1e" /><path d="M7 8h6l1 3H6zM5 14h10l1 3H4z" fill="#f4f4f4" /><rect x="0" y="20" width="20" height="4" rx="1" fill="#d97a10" /></svg></Ti>
      <Ti><svg width="24" height="24" viewBox="0 0 24 24"><rect width="17" height="17" rx="1" fill="#f2f2f2" /><path d="M2 2h6M2 4h6M2 6h2" stroke="#c8302a" strokeWidth="1.500" strokeDasharray="1.500 1" /><rect x="5" y="5" width="9" height="9" fill="#bbb" /><path d="M14 13l8 8M16 21l6-7" stroke="#3a8fd0" strokeWidth="1.500" /></svg></Ti>
    </div>
    <div className="ml-auto flex items-center pr-[19px] h-full">
      <ChevronUp size={16} color="#eee" />
      <Mic size={18} color="#5fb8d8" className="ml-[13px]" strokeWidth={1.6} />
      <svg width="15" height="15" viewBox="0 0 16 16" className="ml-[13px]"><circle cx="8" cy="8" r="7" fill="none" stroke="#eee" strokeWidth="1.200" /><path d="M1 6h14M1 10h14M8 1c-4 4-4 10 0 14M8 1c4 4 4 10 0 14" fill="none" stroke="#eee" strokeWidth=".9" /></svg>
      <Volume2 size={16} color="#ddd" className="ml-[6px]" strokeWidth={1.4} />
      <svg width="16" height="10" viewBox="0 0 16 10" className="ml-[7px]"><rect x=".5" y=".5" width="13" height="9" rx="2" fill="none" stroke="#eee" /><rect x="2" y="2" width="3" height="6" fill="#eee" /><rect x="14" y="3" width="1.500" height="4" fill="#eee" /></svg>
      <div className="w-[56px] text-right leading-[16px] text-[11.5px] ml-[8px] whitespace-nowrap"><div>10:54 AM</div><div>5/9/2024</div></div>
      <svg width="14" height="16" viewBox="0 0 14 16" className="ml-[6px]"><path d="M1 12c1-1 2-2 2-6a4 4 0 0 1 8 0c0 4 1 5 2 6zM5 13.500h4L7 15.500z" fill="#8fd8f5" /></svg>
    </div>
  </div>
);

export default function App() {
  return (
    <div className="w-[1280px] h-[720px] overflow-hidden flex flex-col relative font-['Noto_Sans',sans-serif] bg-white">
      <TitleBar />
      <TabRow />
      <Ribbon />
      <FormulaBar />
      <Sheet />
      <TabsBar />
      <StatusBar />
      <Taskbar />
      <CellStylesMenu />
    </div>
  );
}
